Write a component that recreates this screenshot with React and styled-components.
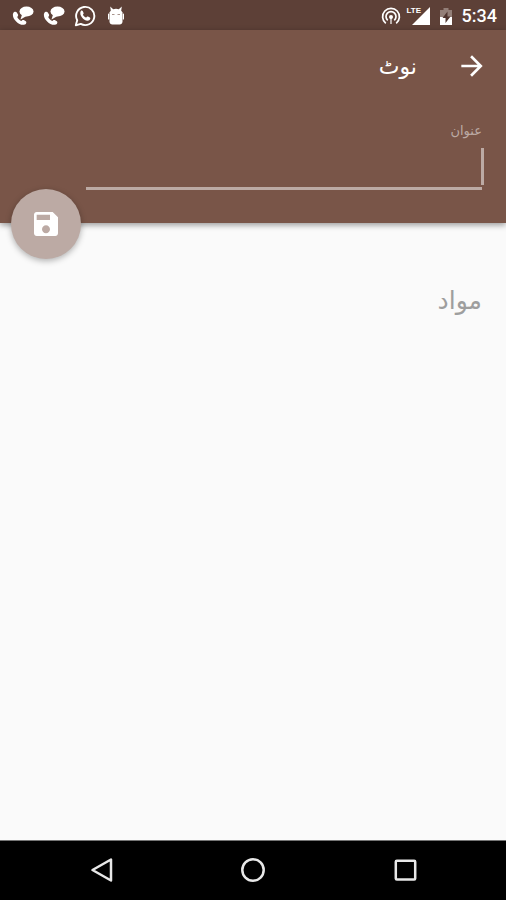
/*
 * Note editor screen
 * Status bar on top, brown header with the title field, note body and the system navigation
 */
import React, { useState } from 'react';
import styled, { createGlobalStyle } from 'styled-components';

const App = () => {
  const [title, setTitle] = useState('');
  const [content, setContent] = useState('');

  return (
    <Screen>
      <GlobalStyle />
      <StatusBar>
        <StatusGroup $gap={9}>
          <CallChatIcon />
          <CallChatIcon />
          <WhatsAppIcon />
          <AndroidIcon />
        </StatusGroup>
        <StatusGroup $gap={6}>
          <HotspotIcon />
          <SignalGroup>
            <Lte>LTE</Lte>
            <SignalIcon />
          </SignalGroup>
          <BatteryIcon />
          <Clock>5:34</Clock>
        </StatusGroup>
      </StatusBar>

      <Header>
        <Toolbar>
          <IconButton type="button" aria-label="واپس">
            <svg width="32" height="32" viewBox="0 0 24 24" fill="#fff">
              <path d="M12 4l-1.41 1.41L16.17 11H4v2h12.17l-5.58 5.59L12 20l8-8z" />
            </svg>
          </IconButton>
          <Heading>نوٹ</Heading>
        </Toolbar>
        <Field>
          <Label htmlFor="note-title">عنوان</Label>
          <TitleInput
            id="note-title"
            type="text"
            value={title}
            onChange={(e) => setTitle(e.target.value)}
          />
          {title === '' && <Caret />}
        </Field>
        <SaveButton type="button" aria-label="محفوظ کریں">
          <svg width="32" height="32" viewBox="0 0 24 24" fill="#fff">
            <path d="M17 3H5c-1.110 0-2 .9-2 2v14c0 1.100.89 2 2 2h14c1.100 0 2-.9 2-2V7l-4-4zm-5 16c-1.660 0-3-1.340-3-3s1.340-3 3-3 3 1.340 3 3-1.340 3-3 3zm3-10H5V5h10v4z" />
          </svg>
        </SaveButton>
      </Header>

      <Body>
        <NoteInput
          aria-label="مواد"
          placeholder="مواد"
          value={content}
          onChange={(e) => setContent(e.target.value)}
        />
      </Body>

      <NavBar>
        <NavButton type="button" aria-label="Back">
          <svg width="24" height="28" viewBox="0 0 24 28">
            <path d="M22 3.500V24.500L3.500 14z" />
          </svg>
        </NavButton>
        <NavButton type="button" aria-label="Home">
          <svg width="24" height="28" viewBox="0 0 24 28">
            <circle cx="12" cy="14" r="10.700" />
          </svg>
        </NavButton>
        <NavButton type="button" aria-label="Recent apps">
          <svg width="24" height="28" viewBox="0 0 24 28">
            <rect x="2.800" y="4.800" width="19.400" height="18.800" rx="1" />
          </svg>
        </NavButton>
      </NavBar>
    </Screen>
  );
};

const CallChatIcon = () => (
  <svg width="22" height="22" viewBox="0 0 22 22" fill="#fff">
    <ellipse cx="14.500" cy="6.500" rx="7" ry="5" />
    <path d="M10 9.500l-1.500 5 6-3.500z" />
    <path d="M1.200 8.200C2 6.500 4 6.300 4.800 7.500l1.200 2c.5 1-.3 1.800-.8 2.500.8 1.800 2.300 3.200 4 4 .8-.6 1.500-1.400 2.600-.9l2 1.200c1 .8.600 2.500-1 3.300C7 21.300-.8 13 1.200 8.200z" />
  </svg>
);

const WhatsAppIcon = () => (
  <svg width="22" height="22" viewBox="0 0 22 22">
    <path
      d="M1.800 20.300l1.400-5A9.100 9.100 0 1 1 6.700 18.900z"
      fill="none"
      stroke="#fff"
      strokeWidth="1.900"
      strokeLinejoin="round"
    />
    <path
      d="M6.800 6c.7-.7 1.500-.6 1.900.1l.9 1.900c.2.700-.3 1.200-.7 1.700.8 1.400 1.900 2.300 3.300 2.900.5-.5 1-1.300 1.800-1l1.900 1c.8.500.4 1.700-.3 2.400-3.700 3.100-11.400-4.200-8.800-9z"
      fill="#fff"
    />
  </svg>
);

const AndroidIcon = () => (
  <svg width="22" height="22" viewBox="0 0 22 22" fill="#fff">
    <path d="M5.200 1.500l3 2.800a8 8 0 0 1 5.600 0l3-2.800-.6 4.200c.8.700 1.200 1.500 1.300 2.300h-13c.1-.8.5-1.600 1.300-2.300z" />
    <path d="M4.500 7.500h13v9.200c0 1.600-1.300 2.800-2.800 2.800H7.300c-1.500 0-2.800-1.200-2.800-2.800z" />
    <path d="M3.600 9v5M18.400 9v5" stroke="#fff" strokeWidth="1.200" strokeLinecap="round" />
    <path d="M7 9.500h2.500M12.500 9.500h2.500" stroke="#a8948d" strokeWidth="1.200" />
  </svg>
);

const HotspotIcon = () => (
  <svg width="20" height="20" viewBox="0 0 20 20" fill="none" stroke="#fff" strokeWidth="1.700">
    <path d="M4.800 17.300a8.400 8.400 0 1 1 10.400 0" />
    <path d="M6.700 14.300a5 5 0 1 1 6.600 0" />
    <circle cx="10" cy="11" r="2" fill="#fff" stroke="none" />
    <path d="M10 12v6" strokeWidth="1.200" />
  </svg>
);

const SignalIcon = () => (
  <svg width="18" height="18" viewBox="0 0 18 18" fill="#fff">
    <path d="M18 0v18H0z" />
  </svg>
);

const BatteryIcon = () => (
  <svg width="20" height="20" viewBox="0 0 20 20">
    <path d="M4 4h3.500V2h5v2H16v7H4z" fill="#937f78" />
    <path d="M4 11h12v8H4z" fill="#fff" />
    <path d="M11.500 5.500L6.500 12h3v5l5-6.500h-3z" fill="#4e342e" />
  </svg>
);

const GlobalStyle = createGlobalStyle`
  * {
    box-sizing: border-box;
  }

  body {
    margin: 0;
    background: #fafafa;
    font-family: 'Noto Sans', 'DejaVu Sans', sans-serif;
  }

  svg {
    display: block;
    flex-shrink: 0;
  }
`;

const Screen = styled.div`
  display: flex;
  flex-direction: column;
  min-height: 100vh;
`;

const StatusBar = styled.div`
  display: flex;
  align-items: center;
  justify-content: space-between;
  height: 30px;
  padding: 2px 9px 0 12px;
  background: #5d4037;
`;

const StatusGroup = styled.div`
  display: flex;
  align-items: center;
  gap: ${props => props.$gap}px;
`;

const SignalGroup = styled.div`
  position: relative;
  padding-left: 5px;
`;

const Lte = styled.span`
  position: absolute;
  top: 0;
  left: 0;
  font: bold 8px/8px 'Liberation Sans', sans-serif;
  color: #fff;
`;

const Clock = styled.time`
  font: 500 18px/22px Roboto, sans-serif;
  color: #fff;
`;

const Header = styled.header`
  position: relative;
  direction: rtl;
  padding: 0 24px 33px;
  background: #795548;
  box-shadow: 0 2px 6px rgba(0, 0, 0, 0.4);
`;

const Toolbar = styled.div`
  display: flex;
  align-items: center;
  gap: 40px;
  height: 72px;
`;

const IconButton = styled.button`
  display: flex;
  margin: 0 -6px;
  padding: 0;
  border: none;
  background: none;
  cursor: pointer;
`;

const Heading = styled.h1`
  margin: 0;
  padding-inline-start: 5px;
  padding-bottom: 2px;
  font-size: 22px;
  line-height: 32px;
  font-weight: 400;
  color: #fff;
`;

const Field = styled.div`
  position: relative;
  display: flex;
  flex-direction: column;
  margin-top: 16px;
  margin-inline-end: 62px;
`;

const Label = styled.label`
  font-size: 13px;
  line-height: 24px;
  color: #bcaaa4;
`;

const TitleInput = styled.input`
  height: 48px;
  padding: 0;
  border: none;
  border-bottom: 3px solid #bcaaa4;
  outline: none;
  background: transparent;
  font: inherit;
  font-size: 24px;
  color: #fff;
  caret-color: #bcaaa4;
`;

const Caret = styled.span`
  position: absolute;
  right: -2px;
  bottom: 5px;
  width: 3px;
  height: 37px;
  background: #bcaaa4;
  pointer-events: none;
`;

const SaveButton = styled.button`
  position: absolute;
  left: 11px;
  bottom: -36px;
  display: flex;
  align-items: center;
  justify-content: center;
  width: 70px;
  height: 70px;
  padding: 0;
  border: none;
  border-radius: 50%;
  background: #bcaaa4;
  box-shadow: 0 2px 6px rgba(0, 0, 0, 0.3);
  cursor: pointer;
`;

const Body = styled.main`
  display: flex;
  flex: 1;
  direction: rtl;
  padding: 56px 24px 24px;
  background: #fafafa;
`;

const NoteInput = styled.textarea`
  flex: 1;
  padding: 0;
  border: none;
  outline: none;
  resize: none;
  background: transparent;
  font: inherit;
  font-size: 25px;
  line-height: 40px;
  color: #212121;

  &::placeholder {
    color: #9e9e9e;
    opacity: 1;
  }
`;

const NavBar = styled.nav`
  display: flex;
  align-items: center;
  justify-content: center;
  gap: 128px;
  height: 60px;
  padding-bottom: 1px;
  border-top: 1px solid #757575;
  background: #000;
`;

const NavButton = styled.button`
  padding: 0;
  border: none;
  background: none;
  cursor: pointer;

  svg {
    fill: none;
    stroke: #e8e8e8;
    stroke-width: 2.500px;
    stroke-linejoin: round;
  }
`;

export default App;
